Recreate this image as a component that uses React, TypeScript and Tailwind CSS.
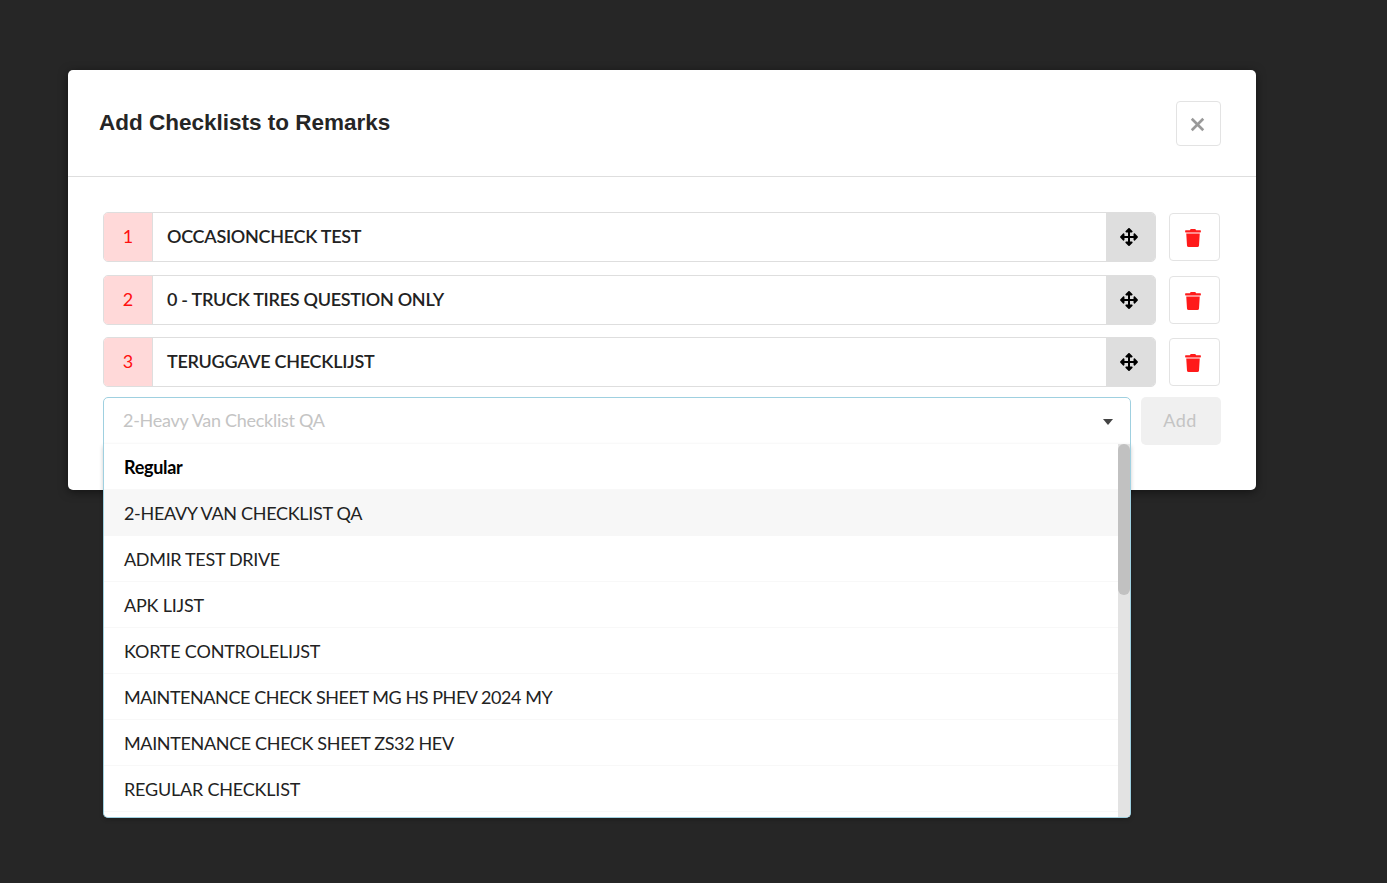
import { FaArrowsAlt, FaTrash } from 'react-icons/fa'
import { X } from 'lucide-react'

const selected = [
  { id: 1, name: 'OCCASIONCHECK TEST', gap: 'mb-[13px]' },
  { id: 2, name: '0 - TRUCK TIRES QUESTION ONLY', gap: 'mb-3' },
  { id: 3, name: 'TERUGGAVE CHECKLIJST', gap: 'mb-2.5' },
]

const options = [
  { name: 'ADMIR TEST DRIVE', spacing: 'tracking-[-0.32px]' },
  { name: 'APK LIJST', spacing: 'tracking-[-0.2px]' },
  { name: 'KORTE CONTROLELIJST', spacing: 'tracking-[-0.2px]' },
  { name: 'MAINTENANCE CHECK SHEET MG HS PHEV 2024 MY', spacing: 'tracking-[-0.44px]' },
  { name: 'MAINTENANCE CHECK SHEET ZS32 HEV', spacing: 'tracking-[-0.36px]' },
  { name: 'REGULAR CHECKLIST', spacing: 'tracking-[-0.2px]' },
]

export default function App() {
  return (
    <div className="min-h-[883px] bg-[#262626] pt-[70px] pl-[68px] font-['Lato','Noto_Sans',sans-serif] overflow-hidden">
      <div className="w-[1188px] h-[420px] bg-white rounded-[5px] shadow-[0_2px_10px_rgba(0,0,0,0.5)]">
        <div className="h-[107px] border-b border-[#dedede] pl-[31px] pr-[35px] pt-[31px] flex justify-between items-start">
          <h2 className="pt-px font-['Liberation_Sans',Arial,sans-serif] font-bold text-[22.5px] leading-[42px] text-[#252525]">
            Add Checklists to Remarks
          </h2>
          <button className="w-[45px] h-[45px] pt-[2px] pr-[2px] border border-[#e3e3e3] rounded-[4px] flex items-center justify-center text-[#999999]">
            <X size={23} strokeWidth={2.8} strokeLinecap="butt" />
          </button>
        </div>

        <div className="pt-[35px] pl-[35px] pr-[35px]">
          {selected.map(row => (
            <div key={row.id} className={`flex items-center ${row.gap}`}>
              <div className="w-[1053px] h-[50px] flex border border-[#dedede] rounded-[5px] overflow-hidden">
                <span className="w-[49px] pb-[2px] bg-[#ffd9d9] border-r border-[#dedede] flex items-center justify-center text-[18px] text-[#ff1010]">
                  {row.id}
                </span>
                <span className="flex-1 pl-[14px] pb-[2px] flex items-center text-[18px] font-semibold tracking-[-0.28px] text-[#222222]">
                  {row.name}
                </span>
                <span className="w-[49px] pr-[4px] bg-[#dedede] flex items-center justify-center text-black">
                  <FaArrowsAlt size={18} />
                </span>
              </div>
              <button className="ml-[13px] w-[51px] h-[48px] pr-[3px] pt-[2px] border border-[#e3e3e3] rounded-[4px] flex items-center justify-center text-[#ff1a1a]">
                <FaTrash size={18} />
              </button>
            </div>
          ))}

          <div className="relative flex items-start">
            <div className="relative w-[1028px] h-[48px] pb-[2px] border border-[#9fd0e0] rounded-t-[5px] pl-[19px] flex items-center text-[18px] tracking-[-0.28px] text-[#c4c4c4]">
              2-Heavy Van Checklist QA
              <span className="absolute right-[17px] top-[21px] w-0 h-0 border-x-[5px] border-x-transparent border-t-[6px] border-t-[#444444]" />
            </div>
            <button className="ml-[10px] w-[80px] h-[48px] pr-[2px] pb-[2px] bg-[#f0f0f0] rounded-[5px] text-[18px] tracking-[0.5px] text-[#c4c4c4]">
              Add
            </button>

            <div className="absolute left-0 top-[47px] w-[1028px] h-[374px] bg-white border-x border-b border-x-[#9fd0e0] border-b-[#9fd0e0] rounded-b-[5px] overflow-hidden shadow-[0_2px_4px_rgba(0,0,0,0.2)]">
              <div className="h-[46px] pl-[20px] pt-[2px] flex items-center border-b border-[#f8f8f8] text-[18px] font-bold tracking-[-0.3px] text-black">
                Regular
              </div>
              <div className="h-[46px] pl-[20px] flex items-center bg-[#f7f7f7] text-[18px] tracking-[-0.32px] text-[#222222]">
                2-HEAVY VAN CHECKLIST QA
              </div>
              {options.map(o => (
                <div key={o.name} className={`h-[46px] pl-[20px] pt-[2px] flex items-center border-b border-[#f8f8f8] text-[18px] text-[#222222] ${o.spacing}`}>
                  {o.name}
                </div>
              ))}
              <div className="absolute right-0 top-0 bottom-0 w-[12px] bg-[#e3e3e3]">
                <div className="h-[151px] bg-[#c1c1c1] rounded-[6px]" />
              </div>
            </div>
          </div>
        </div>
      </div>
    </div>
  )
}
